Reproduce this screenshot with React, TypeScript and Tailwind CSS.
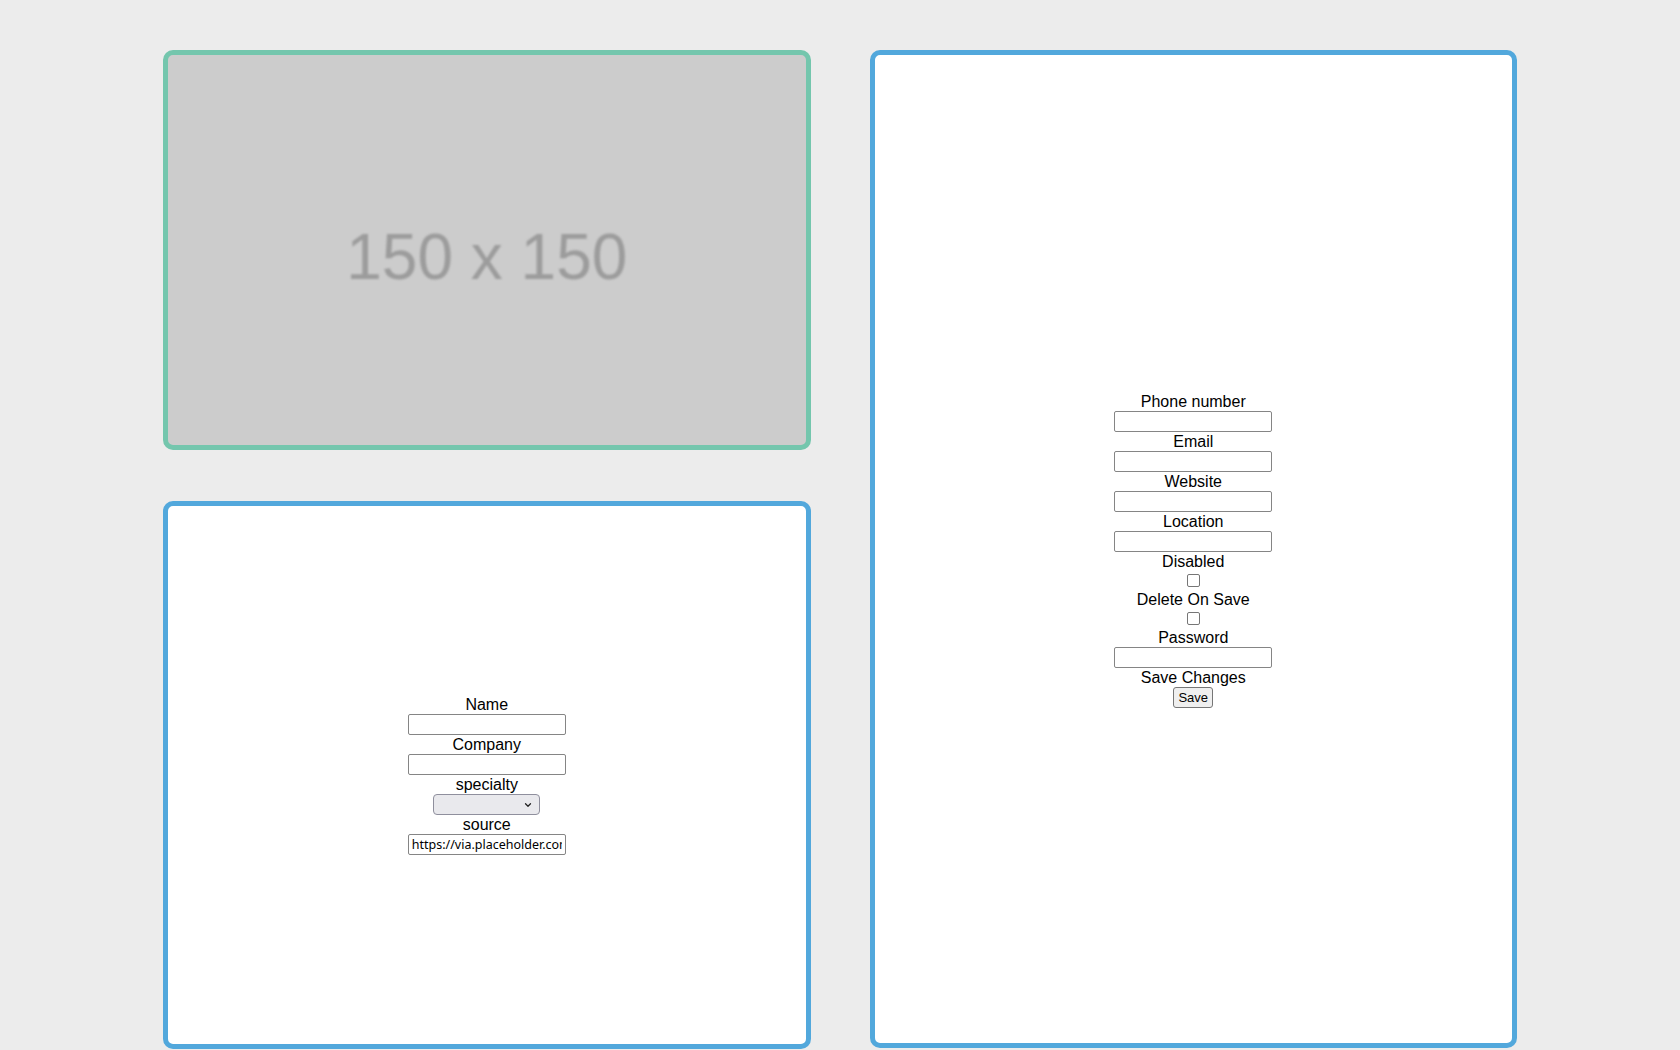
import { ChevronDown } from 'lucide-react'

function Label({ children }: { children: string }) {
  return <div className="h-[19px] text-[16px] leading-[19px] text-black">{children}</div>
}

function TextField({ label, value, type = 'text' }: { label: string; value?: string; type?: string }) {
  return (
    <>
      <Label>{label}</Label>
      <input
        type={type}
        defaultValue={value}
        className="block h-[21px] w-[158px] rounded-[2px] border border-[#858585] bg-white px-[3px] font-['Noto_Sans',sans-serif] text-[12.5px] leading-[19px] text-black outline-none"
      />
    </>
  )
}

function CheckField({ label }: { label: string }) {
  return (
    <>
      <Label>{label}</Label>
      <div className="flex h-[19px] items-center justify-center">
        <span className="block h-[13px] w-[13px] rounded-[2px] border border-[#767676] bg-white" />
      </div>
    </>
  )
}

export default function App() {
  return (
    <div className="min-h-screen bg-[#ececec] px-[163px] pt-[50px] font-['Liberation_Sans',Arial,sans-serif]">
      <div className="grid grid-cols-2 gap-x-[59px]">
        {/* Left column */}
        <div className="flex flex-col gap-[51px]">
          <div className="flex h-[400px] items-center justify-center overflow-hidden rounded-[10px] border-[5px] border-[#74c6ad] bg-[#cccccc]">
            <span className="pt-[14px] text-[64px] leading-none text-[#9c9c9c] blur-[1px]">150 x 150</span>
          </div>

          <div className="flex h-[548px] flex-col items-center justify-center rounded-[10px] border-[5px] border-[#52a8dc] bg-white text-center">
            <TextField label="Name" />
            <TextField label="Company" />
            <Label>specialty</Label>
            <div className="relative h-[21px] w-[107px]">
              <select className="block h-[21px] w-[107px] appearance-none rounded-[4px] border border-[#8f8f9d] bg-[#e9e9ed] text-[13px] outline-none" />
              <ChevronDown className="absolute right-[7px] top-[6px] h-[10px] w-[10px] text-[#222]" strokeWidth={3} />
            </div>
            <TextField label="source" value="https://via.placeholder.com/150" />
          </div>
        </div>

        {/* Right column */}
        <div className="flex h-[998px] flex-col items-center justify-center rounded-[10px] border-[5px] border-[#52a8dc] bg-white pt-[2px] text-center">
          <TextField label="Phone number" />
          <TextField label="Email" />
          <TextField label="Website" />
          <TextField label="Location" />
          <CheckField label="Disabled" />
          <CheckField label="Delete On Save" />
          <TextField label="Password" type="password" />
          <Label>Save Changes</Label>
          <button className="h-[21px] w-[40px] rounded-[3px] border border-[#767676] bg-[#efefef] text-[13px] leading-[19px] text-black">
            Save
          </button>
        </div>
      </div>
    </div>
  )
}
